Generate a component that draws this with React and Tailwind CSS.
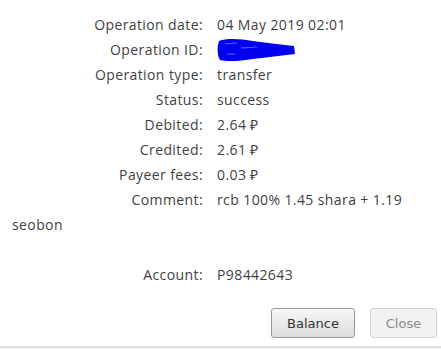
const rows = [
  ['Operation date:', '04 May 2019 02:01'],
  ['Operation ID:', null],
  ['Operation type:', 'transfer'],
  ['Status:', 'success'],
  ['Debited:', '2.64 ₽'],
  ['Credited:', '2.61 ₽'],
  ['Payeer fees:', '0.03 ₽'],
  ['Comment:', 'rcb 100% 1.45 shara + 1.19 seobon'],
];

function Label({ children }) {
  return (
    <span className="inline-block w-[191px] text-right mr-[14px]">{children}</span>
  );
}

function Scribble() {
  return (
    <svg width="80" height="24" viewBox="0 0 80 24" className="inline-block align-middle -mt-[2px]">
      <path
        d="M2 3 C10 0 24 1 36 3 C48 5 62 6 77 8 L78 16 C64 18 50 19 36 21 C24 23 10 24 3 22 C0 17 0 8 2 3 Z"
        fill="#0000ee"
      />
      <path d="M8 6 L20 5 M24 10 L40 9 M10 16 L18 16" stroke="#5566ff" strokeWidth="1" />
    </svg>
  );
}

export default function App() {
  return (
    <div className="w-[441px] h-[349px] bg-white flex flex-col text-[#3f3f3f] text-[14px] leading-[25px] tracking-[0.4px]" style={{ fontFamily: '"Open Sans", "Liberation Sans", sans-serif' }}>
      <div className="pt-[12px] pl-[12px] pr-[20px]">
        {rows.map(([label, value]) => (
          <p key={label}>
            <Label>{label}</Label>
            {value === null ? <Scribble /> : value}
          </p>
        ))}
        <p>&nbsp;</p>
        <p>
          <Label>Account:</Label>P98442643
        </p>
      </div>
      <div className="flex justify-end gap-[15px] pr-[4px] mt-[21px] tracking-normal" style={{ fontFamily: '"DejaVu Sans", Verdana, sans-serif' }}>
        <button className="w-[84px] h-[30px] rounded-[3px] border border-[#9a9a9a] bg-gradient-to-b from-[#f7f7f7] to-[#dcdcdc] text-[#333] text-[13px]">
          Balance
        </button>
        <button className="w-[67px] h-[30px] rounded-[3px] border border-[#d4d4d4] bg-[#f2f2f2] text-[#8a8a8a] text-[13px]">
          Close
        </button>
      </div>
      <div className="mt-auto h-[2px] bg-[#dedede] mb-[1px]" />
    </div>
  );
}
